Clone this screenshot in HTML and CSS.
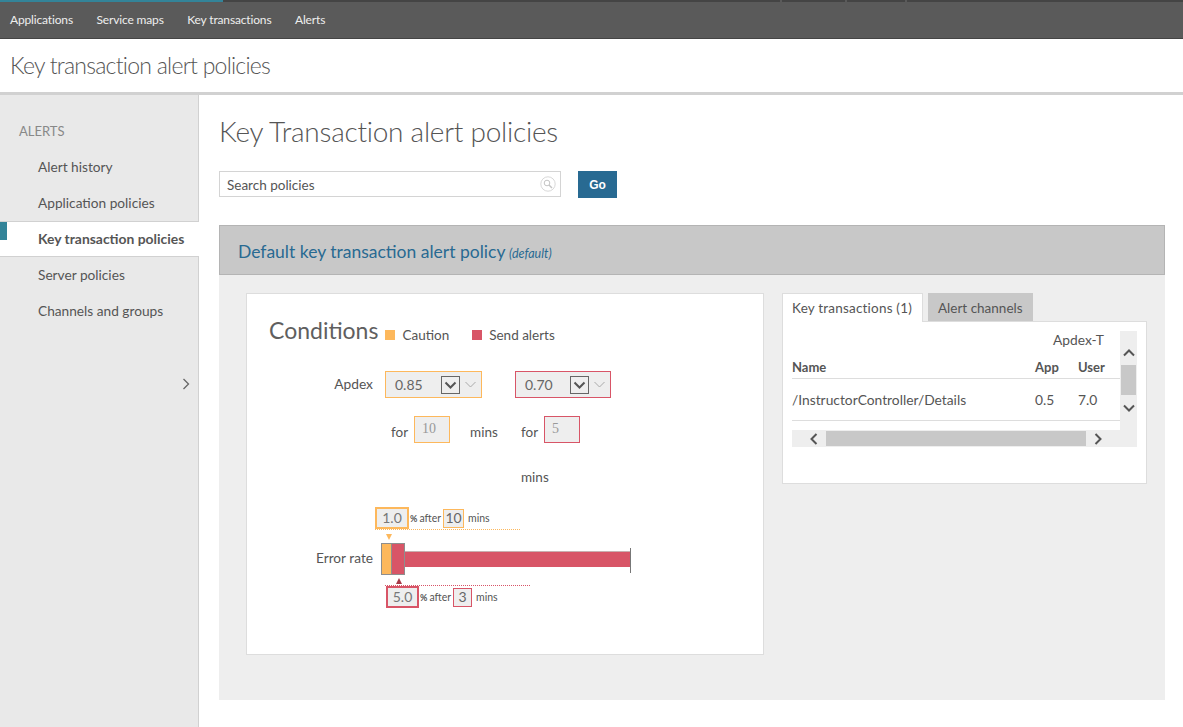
FILE: index.html
```html
<!DOCTYPE html>
<html lang="en">
<head>
  <meta charset="UTF-8">
  <title>Key transaction alert policies</title>
  <link rel="stylesheet" href="styles.css">
</head>
<body>

  <!-- Top navigation -->
  <div class="strip">
    <span class="strip-active"></span>
    <span class="strip-a"></span>
    <span class="strip-b"></span>
    <span class="strip-c"></span>
    <span class="strip-d"></span>
  </div>
  <nav class="topnav">
    <a>Applications</a>
    <a>Service maps</a>
    <a>Key transactions</a>
    <a>Alerts</a>
  </nav>

  <header class="pagehead">Key transaction alert policies</header>

  <div class="layout">

    <!-- Sidebar -->
    <aside class="sidebar">
      <div class="side-title">ALERTS</div>
      <a class="side-link">Alert history</a>
      <a class="side-link">Application policies</a>
      <a class="side-link active">Key transaction policies</a>
      <a class="side-link">Server policies</a>
      <a class="side-link">Channels and groups</a>
      <svg class="side-toggle" width="8" height="12" viewBox="0 0 8 12"><path d="M1.5 1l5 5-5 5" fill="none" stroke="#666" stroke-width="1.3"/></svg>
    </aside>

    <main class="content">
      <h1>Key Transaction alert policies</h1>

      <div class="search-row">
        <div class="search">
          <span>Search policies</span>
          <svg width="16" height="16" viewBox="0 0 16 16"><circle cx="8" cy="8" r="7.2" fill="none" stroke="#d8d8d8"/><circle cx="7" cy="7" r="2.8" fill="none" stroke="#c4c4c4"/><path d="M9 9l3 3" stroke="#c4c4c4" stroke-width="1.4"/></svg>
        </div>
        <button class="go">Go</button>
      </div>

      <section class="policy">
        <div class="policy-head">
          <a>Default key transaction alert policy</a>
          <em>(default)</em>
        </div>

        <div class="policy-body">

          <!-- Conditions -->
          <div class="conditions">
            <div class="cond-head">
              <h2>Conditions</h2>
              <span class="legend"><i class="swatch caution"></i>Caution</span>
              <span class="legend"><i class="swatch alert"></i>Send alerts</span>
            </div>

            <div class="apdex">
              <div class="apdex-label">Apdex</div>
              <div class="apdex-col first">
                <div class="select sel-caution">
                  <span>0.85</span>
                  <svg class="sel-box" width="19" height="18" viewBox="0 0 19 18"><rect x=".5" y=".5" width="18" height="17" fill="none" stroke="#666"/><path d="M4.5 6.5l5 5 5-5" fill="none" stroke="#555" stroke-width="2"/></svg>
                  <svg class="sel-arrow" width="11" height="7" viewBox="0 0 11 7"><path d="M.5 1l5 5 5-5" fill="none" stroke="#aaa"/></svg>
                </div>
                <div class="for-row">
                  <span class="for">for</span>
                  <span class="num caution-line">10</span>
                  <span class="for mins">mins</span>
                </div>
              </div>
              <div class="apdex-col">
                <div class="select sel-alert">
                  <span>0.70</span>
                  <svg class="sel-box" width="19" height="18" viewBox="0 0 19 18"><rect x=".5" y=".5" width="18" height="17" fill="none" stroke="#666"/><path d="M4.5 6.5l5 5 5-5" fill="none" stroke="#555" stroke-width="2"/></svg>
                  <svg class="sel-arrow" width="11" height="7" viewBox="0 0 11 7"><path d="M.5 1l5 5 5-5" fill="none" stroke="#aaa"/></svg>
                </div>
                <div class="for-row">
                  <span class="for">for</span>
                  <span class="num alert-line">5</span>
                </div>
                <div class="mins-wrap">mins</div>
              </div>
            </div>

            <!-- Error rate slider -->
            <div class="errors">
              <div class="err-row err-top">
                <span class="val caution-thick">1.0</span>
                <b>%</b><small>after</small>
                <span class="val-sm caution-line">10</span>
                <small class="m">mins</small>
              </div>
              <div class="bar-row">
                <span class="bar-label">Error rate</span>
                <div class="bar">
                  <i class="mark-top"></i>
                  <span class="seg seg-c"></span>
                  <span class="seg seg-a"></span>
                  <span class="bar-fill"></span>
                  <i class="mark-bottom"></i>
                </div>
              </div>
              <div class="err-row err-bottom">
                <span class="val alert-thick">5.0</span>
                <b>%</b><small>after</small>
                <span class="val-sm narrow alert-line">3</span>
                <small class="m">mins</small>
              </div>
            </div>
          </div>

          <!-- Tabs -->
          <div class="side-panel">
            <div class="tabs">
              <a class="tab on">Key transactions (1)</a>
              <a class="tab">Alert channels</a>
            </div>
            <div class="tab-body">
              <div class="scroller">
                <div class="scroll-main">
                  <table>
                    <colgroup><col><col class="c-app"><col class="c-user"></colgroup>
                    <tr class="group"><td></td><td colspan="2">Apdex-T</td></tr>
                    <tr class="heads"><th>Name</th><th>App</th><th>User</th></tr>
                    <tr class="row"><td>/InstructorController/Details</td><td>0.5</td><td>7.0</td></tr>
                  </table>
                  <div class="vbar">
                    <svg width="12" height="8" viewBox="0 0 12 8"><path d="M1 6.5l5-5 5 5" fill="none" stroke="#555" stroke-width="2"/></svg>
                    <span class="vthumb"></span>
                    <svg width="12" height="8" viewBox="0 0 12 8"><path d="M1 1.5l5 5 5-5" fill="none" stroke="#555" stroke-width="2"/></svg>
                  </div>
                </div>
                <div class="hbar">
                  <svg width="8" height="12" viewBox="0 0 8 12"><path d="M6.5 1l-5 5 5 5" fill="none" stroke="#555" stroke-width="2"/></svg>
                  <span class="hthumb"></span>
                  <svg width="8" height="12" viewBox="0 0 8 12"><path d="M1.5 1l5 5-5 5" fill="none" stroke="#555" stroke-width="2"/></svg>
                </div>
              </div>
            </div>
          </div>

        </div>
      </section>
    </main>
  </div>

</body>
</html>
```

FILE: styles.css
```css
* {
  box-sizing: border-box;
}
html, body {
  height: 727px;
  overflow: hidden;
}
body {
  margin: 0;
  font-family: "Lato", "Open Sans", sans-serif;
  font-size: 14px;
  color: #555;
  background: #fff;
}

/* top bar */
.strip {
  display: flex;
  height: 2px;
  background: #5a5a5a;
  gap: 2px;
}
.strip span {
  background: #444;
}
.strip .strip-active {
  width: 223px;
  background: #338499;
  margin-right: -2px;
}
.strip-a { width: 557px; }
.strip-b { width: 63px; }
.strip-c { width: 58px; }
.strip-d { flex: 1; }
.topnav {
  display: flex;
  gap: 23.5px;
  height: 37px;
  padding: 10px 0 0 10px;
  background: #5a5a5a;
  border-bottom: 1px solid #444;
  color: #eee;
  font-size: 12px;
  letter-spacing: -0.15px;
  line-height: 16px;
}
.pagehead {
  height: 56px;
  padding: 11px 0 0 10px;
  background: #fff;
  border-bottom: 3px solid #d1d1d1;
  font-size: 23px;
  font-weight: 300;
  line-height: 30px;
  color: #555;
  letter-spacing: -0.75px;
}
.layout {
  display: flex;
  height: 632px;
}

/* sidebar */
.sidebar {
  position: relative;
  width: 199px;
  flex: none;
  background: #e9e9e9;
  border-right: 1px solid #d1d1d1;
  padding-top: 18px;
}
.side-title {
  height: 36px;
  padding: 10px 0 0 19px;
  color: #888;
  font-size: 13px;
  line-height: 16px;
}
.side-link {
  display: block;
  height: 36px;
  padding-left: 38px;
  line-height: 36px;
  font-size: 13.7px;
  color: #555;
}
.side-link.active {
  position: relative;
  width: 199px;
  background: #fff;
  border-top: 1px solid #d1d1d1;
  border-bottom: 1px solid #d1d1d1;
  line-height: 34px;
  font-weight: 700;
  font-size: 13.9px;
}
.side-link.active::before {
  content: "";
  position: absolute;
  left: 0;
  top: 0;
  width: 7px;
  height: 18px;
  background: #338499;
}
.side-toggle {
  position: absolute;
  left: 182px;
  top: 283px;
}

/* main */
.content {
  flex: 1;
  padding: 0 18px 0 20px;
}
h1 {
  margin: 18px 0 0;
  font-size: 28px;
  font-weight: 300;
  letter-spacing: -0.25px;
  line-height: 36px;
  color: #555;
}
.search-row {
  display: flex;
  align-items: flex-start;
  margin-top: 22px;
}
.search {
  display: flex;
  align-items: center;
  justify-content: space-between;
  width: 342px;
  height: 26px;
  padding: 0 4px 0 7px;
  border: 1px solid #d4d4d4;
  font-size: 13.5px;
}
.search span {
  padding-top: 1px;
}
.go {
  width: 39px;
  height: 27px;
  margin-left: 17px;
  border: 0;
  background: #286a92;
  color: #fff;
  font-family: "Liberation Sans", sans-serif;
  font-size: 12px;
  font-weight: 700;
}
.policy {
  margin-top: 27px;
}
.policy-head {
  height: 50px;
  padding-left: 18px;
  background: #c8c8c8;
  border: 1px solid #b4b4b4;
  line-height: 52px;
  color: #286a92;
}
.policy-head a {
  font-size: 17.5px;
}
.policy-head em {
  font-size: 12.5px;
}
.policy-body {
  display: flex;
  align-items: flex-start;
  height: 425px;
  padding: 18px 18px 0 27px;
  background: #eee;
}

/* conditions card */
.conditions {
  width: 518px;
  height: 362px;
  background: #fff;
  border: 1px solid #ddd;
  padding: 21px 0 0 22px;
}
.cond-head {
  display: flex;
  align-items: center;
  height: 30px;
}
h2 {
  margin: 0 7px 0 0;
  font-size: 23px;
  font-weight: 400;
  line-height: 30px;
  color: #5f5f5f;
}
.legend {
  display: flex;
  align-items: center;
  margin-right: 23px;
  font-size: 13.5px;
  padding-top: 10px;
}
.swatch {
  width: 10px;
  height: 10px;
  margin-right: 7px;
}
.swatch.caution { background: #fdb85c; }
.swatch.alert { background: #d85567; }
.caution-line { border: 1px solid #fdb85c; }
.alert-line { border: 1px solid #d85567; }
.apdex {
  display: flex;
  margin-top: 26px;
  height: 118px;
  font-size: 13.5px;
}
.apdex-label {
  width: 116px;
  padding: 4px 12px 0 0;
  text-align: right;
  font-size: 13.8px;
}
.apdex-col {
  width: 96px;
}
.apdex-col.first {
  width: 130px;
}
.select {
  display: flex;
  align-items: center;
  height: 27px;
  padding-left: 9px;
  background: #eee;
  font-size: 14px;
  color: #666;
}
.sel-caution {
  width: 97px;
  border: 1px solid #fdb85c;
}
.sel-alert {
  width: 96px;
  border: 1px solid #d85567;
}
.select > span {
  width: 46px;
}
.sel-alert > span {
  width: 45px;
}
.sel-arrow {
  margin-left: 5px;
}
.for-row {
  display: flex;
  align-items: center;
  margin-top: 18px;
  padding-left: 6px;
  height: 27px;
}
.for {
  padding-top: 4px;
}
.num {
  display: block;
  width: 36px;
  height: 27px;
  margin-left: 6px;
  padding: 0 0 2px 7px;
  background: #eee;
  color: #999;
  font-family: "Liberation Serif", serif;
  font-size: 14px;
  line-height: 24px;
}
.mins {
  margin-left: 20px;
}
.mins-wrap {
  margin-top: 24px;
  padding-left: 6px;
  line-height: 20px;
}
.errors {
  position: relative;
}
.err-row {
  display: flex;
  align-items: center;
  color: #555;
  font-size: 10px;
}
.err-top {
  width: 145px;
  height: 22px;
  margin-left: 106px;
  margin-top: 18px;
}
.err-top::after,
.err-bottom::after {
  content: "";
  position: absolute;
  height: 0;
}
.err-top::after {
  left: 106px;
  top: 22px;
  width: 145px;
  border-top: 1px dotted #fdb85c;
}
.err-bottom::after {
  left: 116px;
  top: 78px;
  width: 145px;
  border-top: 1px dotted #d85567;
}
.val {
  width: 34px;
  height: 22px;
  background: #eee;
  text-align: center;
  font-size: 14px;
  line-height: 18px;
  color: #777;
}
.caution-thick { border: 2px solid #fdb85c; }
.alert-thick { border: 2px solid #d85567; }
.err-row b {
  margin-left: 1px;
  font-size: 9px;
}
.err-row small {
  font-size: 10.5px;
  margin-left: 2px;
}
.val-sm {
  width: 21px;
  height: 19px;
  margin-left: 2px;
  text-align: center;
  font-size: 14px;
  line-height: 16px;
  background: #eee;
  color: #666;
}
.val-sm.narrow {
  width: 19px;
}
.err-row .m {
  margin-left: 4px;
}
.bar-row {
  display: flex;
  align-items: center;
  height: 32px;
  margin-top: 14px;
}
.bar-label {
  width: 112px;
  padding: 0 8px 3px 0;
  text-align: right;
  font-size: 13.7px;
}
.bar {
  position: relative;
  display: flex;
  align-items: center;
  height: 32px;
}
.seg {
  height: 32px;
  border: 1px solid #8e8e8e;
}
.seg-c {
  width: 10px;
  background: #fdb85c;
  border-right: 0;
}
.seg-a {
  width: 14px;
  background: #d85567;
}
.bar-fill {
  width: 225px;
  height: 16px;
  background: #d85567;
  border-top: 1px solid #c8b0b0;
}
.bar::after {
  content: "";
  position: absolute;
  left: 249px;
  top: 5px;
  width: 1px;
  height: 25px;
  background: #777;
}
.mark-top,
.mark-bottom {
  position: absolute;
  width: 0;
  height: 0;
  border-left: 3px solid transparent;
  border-right: 3px solid transparent;
}
.mark-top {
  left: 5px;
  top: -9px;
  border-top: 6px solid #fdb85c;
}
.mark-bottom {
  left: 15px;
  bottom: -9px;
  border-bottom: 6px solid #a83a48;
}
.err-bottom {
  margin-left: 117px;
  margin-top: 11px;
  height: 22px;
}
.err-bottom .val {
  width: 33px;
}

/* tabs panel */
.side-panel {
  width: 365px;
  margin-left: 18px;
}
.tabs {
  display: flex;
  gap: 5px;
  height: 28px;
  font-size: 13.5px;
}
.tab {
  width: 105px;
  height: 28px;
  padding-left: 9px;
  line-height: 28px;
  background: #c8c8c8;
  border: 1px solid #c8c8c8;
  border-bottom: 0;
}
.tab.on {
  position: relative;
  z-index: 1;
  width: 141px;
  height: 29px;
  background: #fff;
  border-color: #ddd;
  letter-spacing: 0.2px;
}
.tab-body {
  height: 163px;
  padding: 9px 0 0 9px;
  background: #fff;
  border: 1px solid #ddd;
}
.scroller {
  width: 345px;
  font-size: 13.8px;
}
.scroll-main {
  display: flex;
  height: 99px;
}
table {
  width: 328px;
  height: 89px;
  table-layout: fixed;
  border-collapse: collapse;
  align-self: flex-start;
}
td, th {
  padding: 0;
  text-align: left;
}
.group td {
  height: 24px;
  padding-bottom: 7px;
  text-align: right;
  padding-right: 16px;
  white-space: nowrap;
}
.group td:first-child {
  padding: 0;
}
.heads th {
  height: 23px;
  padding-top: 2px;
  border-bottom: 1px solid #ddd;
  font-size: 13px;
}
.c-app { width: 43px; }
.c-user { width: 42px; }
.row td {
  height: 42px;
  border-bottom: 1px solid #ddd;
}
.vbar {
  display: flex;
  flex-direction: column;
  align-items: center;
  width: 17px;
  height: 99px;
  padding-top: 18px;
  background: #eee;
}
.vthumb {
  flex: none;
  width: 15px;
  height: 30px;
  margin: 8px 0 9px;
  background: #c8c8c8;
}
.hbar {
  display: flex;
  align-items: center;
  width: 345px;
  height: 17px;
  padding-left: 18px;
  background: #eee;
}
.hthumb {
  width: 260px;
  height: 15px;
  margin: 0 8px;
  background: #c8c8c8;
}
```
